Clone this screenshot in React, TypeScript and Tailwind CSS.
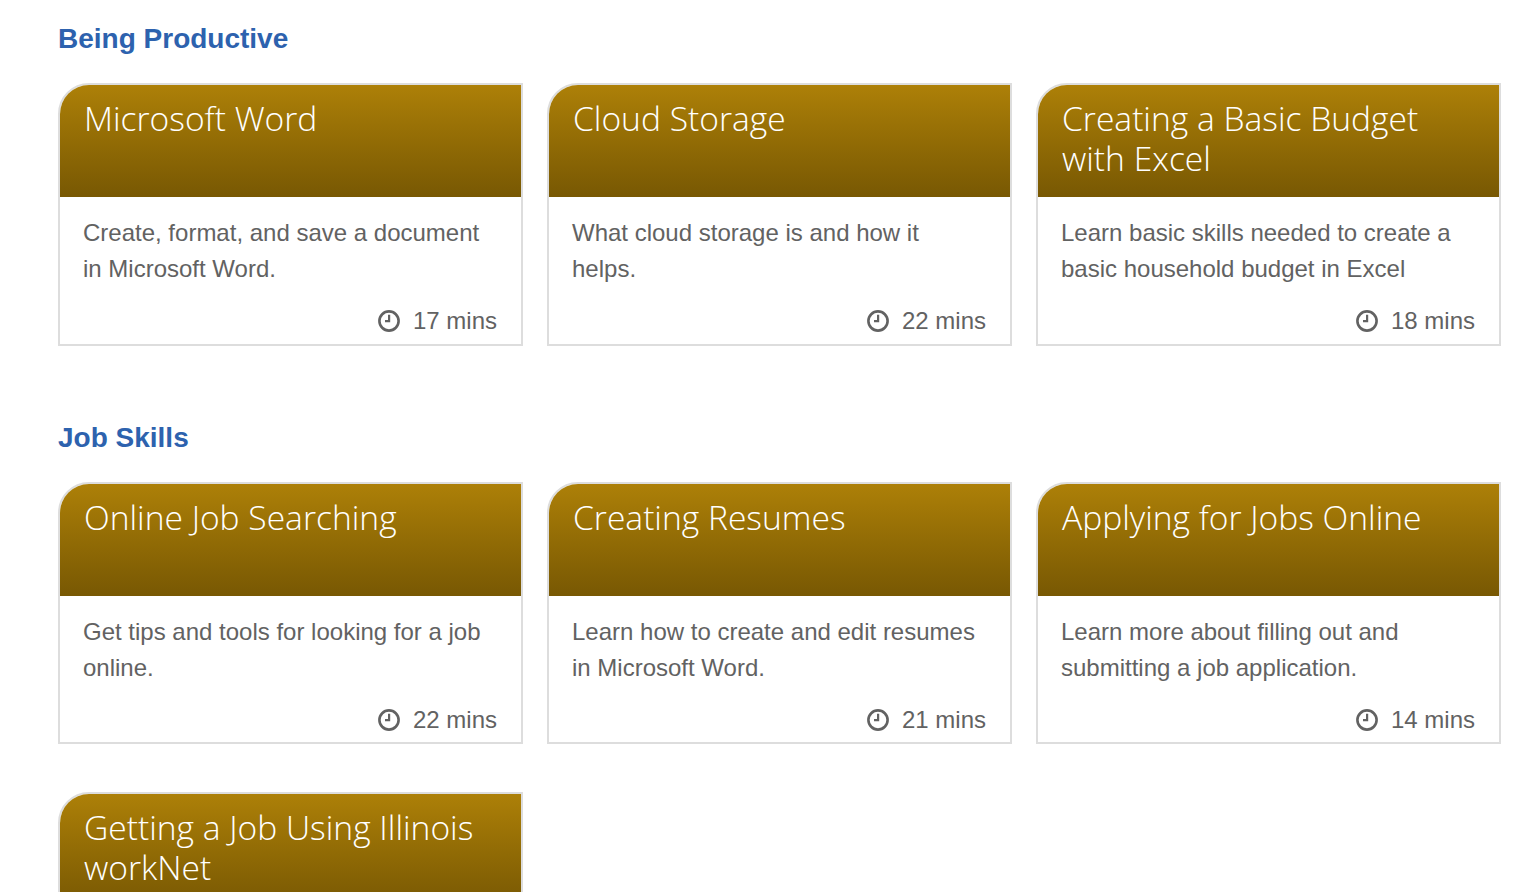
type Course = { title: string; text?: string; mins?: number };

const productive: Course[] = [
  { title: "Microsoft Word", text: "Create, format, and save a document in Microsoft Word.", mins: 17 },
  { title: "Cloud Storage", text: "What cloud storage is and how it helps.", mins: 22 },
  { title: "Creating a Basic Budget with Excel", text: "Learn basic skills needed to create a basic household budget in Excel", mins: 18 },
];
const job: Course[] = [
  { title: "Online Job Searching", text: "Get tips and tools for looking for a job online.", mins: 22 },
  { title: "Creating Resumes", text: "Learn how to create and edit resumes in Microsoft Word.", mins: 21 },
  { title: "Applying for Jobs Online", text: "Learn more about filling out and submitting a job application.", mins: 14 },
  { title: "Getting a Job Using Illinois workNet" },
];

function ClockIcon() {
  return (
    <svg viewBox="0 0 22 22" fill="none" stroke="currentColor" className="mb-px size-[22px]" aria-hidden="true">
      <circle cx="11" cy="11" r="9.6" strokeWidth="2.6" />
      <path d="M11.1 4.8V11.2H7" strokeWidth="2.2" />
    </svg>
  );
}

function Card({ c }: { c: Course }) {
  return (
    <article className="flex w-[465px] flex-col overflow-hidden rounded-tl-[31px] border-2 border-[#dddddd] bg-white">
      <h3 className="h-28 shrink-0 bg-linear-to-b from-[#ad8008] to-[#785803] pt-[13px] pr-5 pl-6 font-['Open_Sans',sans-serif] text-[33.6px] leading-10 font-light text-white">
        {c.title}
      </h3>
      {c.text && <p className="h-[90px] pt-[18px] pr-[23px] pl-[23px] text-[24px] leading-9">{c.text}</p>}
      {c.mins && (
        <div className="flex items-center justify-end gap-[13px] pt-[16px] pr-6 text-[24px] leading-9">
          <ClockIcon />
          <span>{c.mins} mins</span>
        </div>
      )}
    </article>
  );
}

function Section({ title, items, rows }: { title: string; items: Course[]; rows: string }) {
  return (
    <section>
      <h2 className="text-[28px] leading-8 font-bold text-[#2d62ae]">{title}</h2>
      <div className={`mt-[28px] grid grid-cols-[repeat(3,465px)] gap-x-6 gap-y-12 ${rows}`}>
        {items.map((c) => (
          <Card key={c.title} c={c} />
        ))}
      </div>
    </section>
  );
}

export default function App() {
  return (
    <main className="flex h-[892px] w-[1528px] flex-col gap-[76px] overflow-hidden bg-white pt-[23px] pl-[58px] font-['Liberation_Sans',Arial,sans-serif] text-[#626262]">
      <Section title="Being Productive" items={productive} rows="auto-rows-[263px]" />
      <Section title="Job Skills" items={job} rows="auto-rows-[262px]" />
    </main>
  );
}
